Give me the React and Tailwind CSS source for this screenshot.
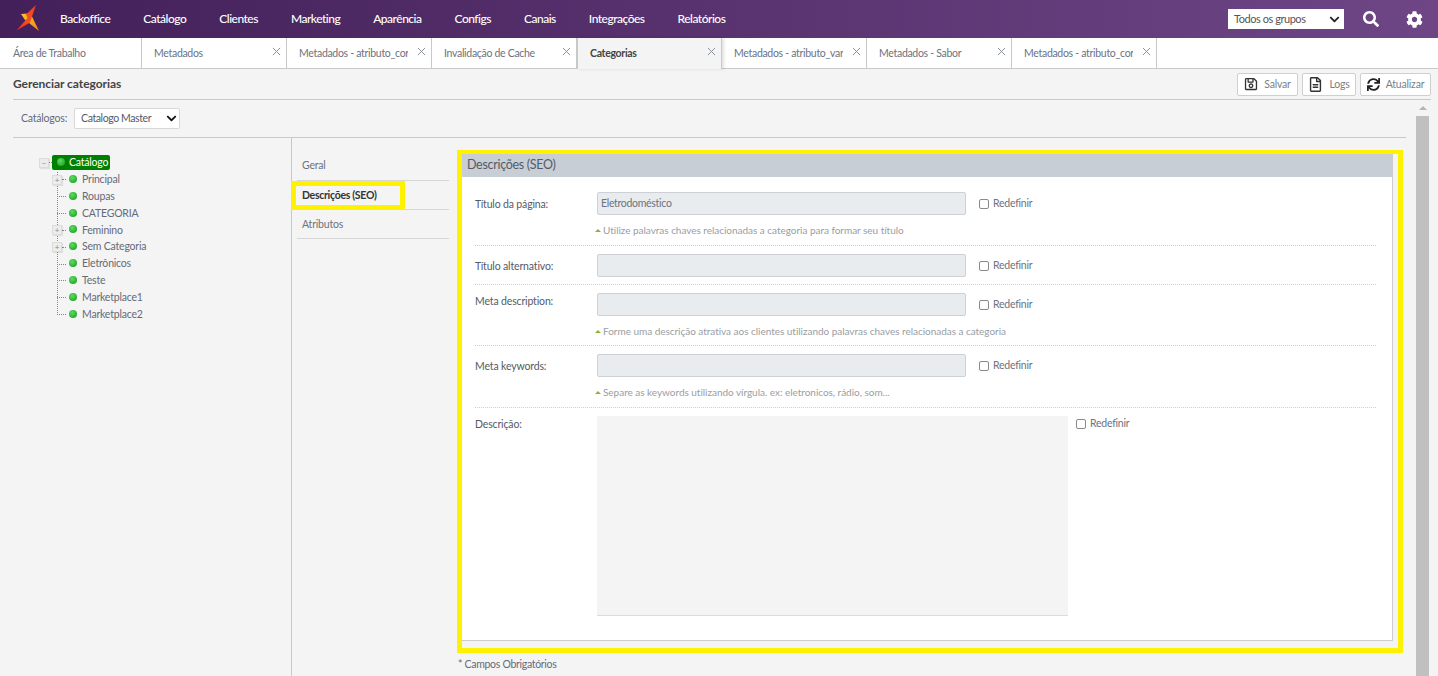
import { FaChevronDown, FaCog, FaRegFileAlt, FaRegSave, FaSearch, FaSync } from 'react-icons/fa';

const menu = ['Catálogo', 'Clientes', 'Marketing', 'Aparência', 'Configs', 'Canais', 'Integrações', 'Relatórios'];

const tabs = [
  { label: 'Área de Trabalho', width: 'w-[142px]', fixed: true },
  { label: 'Metadados', width: 'w-[145px]' },
  { label: 'Metadados - atributo_cor', width: 'w-[145px]', cut: true },
  { label: 'Invalidação de Cache', width: 'w-[145px]' },
  { label: 'Categorias', width: 'w-[145px]', active: true },
  { label: 'Metadados - atributo_variacao', width: 'w-[145px]', cut: true },
  { label: 'Metadados - Sabor', width: 'w-[145px]' },
  { label: 'Metadados - atributo_cor', width: 'w-[145px]', cut: true },
];

const tree = [
  { label: 'Principal', expandable: true },
  { label: 'Roupas' },
  { label: 'CATEGORIA' },
  { label: 'Feminino', expandable: true },
  { label: 'Sem Categoria', expandable: true },
  { label: 'Eletrônicos' },
  { label: 'Teste' },
  { label: 'Marketplace1' },
  { label: 'Marketplace2' },
];

const CloseIcon = () => (
  <svg viewBox="0 0 10 10" className="h-[9px] w-[9px] text-[#8b8f96]" fill="none" stroke="currentColor" strokeWidth="1.1">
    <path d="M1 1l8 8M9 1l-8 8" />
  </svg>
);

const Logo = () => (
  <svg viewBox="7 2 26 28" className="h-[28px] w-[26px]">
    <defs>
      <linearGradient id="logo" x1="0" y1="1" x2="1" y2="0.2">
        <stop offset="0" stopColor="#e62a24" />
        <stop offset="0.55" stopColor="#f4511e" />
        <stop offset="1" stopColor="#f0402a" />
      </linearGradient>
      <linearGradient id="logo2" x1="0" y1="0" x2="1" y2="1">
        <stop offset="0" stopColor="#fbc02d" />
        <stop offset="0.6" stopColor="#f9a01b" />
        <stop offset="1" stopColor="#f6801f" />
      </linearGradient>
    </defs>
    <path d="M13 12l7-.5 4 3 7 14.5-10-8-4-3z" fill="url(#logo2)" />
    <path d="M28 3L18 12.5l1.5 3.5L8.5 28.5 22 20.5 24.5 13z" fill="url(#logo)" />
  </svg>
);

const Header = () => (
  <header className="flex h-[38px] items-center bg-gradient-to-r from-[#432059] to-[#6e4686] pl-[15px] pr-[15px]">
    <div className="mt-[-2px] mr-[18px] w-[27px]"><Logo /></div>
    <nav className="flex items-center gap-[33px] text-[12px] font-medium tracking-[-0.5px] text-white">
      <span>Backoffice</span>
      {menu.map((item) => <span key={item}>{item}</span>)}
    </nav>
    <div className="ml-auto flex items-center">
      <div className="flex h-[20px] w-[116px] items-center justify-between bg-white pl-[6px] pr-[4px] text-[11px] tracking-[-0.45px] text-[#555]">
        Todos os grupos
        <FaChevronDown className="text-[11px] text-[#222]" />
      </div>
      <FaSearch className="ml-[19px] text-[16px] text-white" />
      <FaCog className="ml-[27px] text-[17px] text-white" />
    </div>
  </header>
);

const TabBar = () => (
  <div className="flex h-[31px] border-b border-[#c9c9c9] bg-white">
    {tabs.map((tab, index) => (
      <div
        key={index}
        className={`relative flex h-[31px] shrink-0 items-center pt-[1px] pl-[12px] text-[10.5px] tracking-[-0.3px] ${tab.width} ${tab.fixed ? 'pl-[13px]' : ''} ${tab.active ? 'border-r border-l border-[#c9c9c9] border-b-[#f4f4f4] bg-[#f4f4f4] font-bold text-[#444] shadow-[2px_0_3px_rgba(0,0,0,0.12)]' : 'border-r border-[#c9c9c9] text-[#6c7280]'}`}
      >
        <span className={tab.cut ? 'w-[109px] overflow-hidden whitespace-nowrap' : 'whitespace-nowrap'}>{tab.label}</span>
        {!tab.fixed && <span className="absolute top-[9px] right-[5px]"><CloseIcon /></span>}
      </div>
    ))}
  </div>
);

const ToolButton = ({ icon, label, width }) => (
  <div className={`flex h-[23px] items-center justify-center gap-[6px] rounded-[2px] border border-[#cfcfcf] bg-white text-[10.5px] tracking-[-0.2px] text-[#7b7f86] ${width}`}>
    {icon}
    <span className="pt-[2px]">{label}</span>
  </div>
);

const TitleBar = () => (
  <div className="ml-[13px] mr-[7px] flex h-[31px] items-center justify-between border-b border-[#c9c9c9]">
    <h1 className="text-[12px] font-bold tracking-[-0.05px] text-[#444]">Gerenciar categorias</h1>
    <div className="flex gap-[4px]">
      <ToolButton width="w-[61px]" label="Salvar" icon={<FaRegSave className="text-[14px] text-[#333]" />} />
      <ToolButton width="w-[54px]" label="Logs" icon={<FaRegFileAlt className="text-[15px] text-[#333]" />} />
      <ToolButton width="w-[71px]" label="Atualizar" icon={<FaSync className="text-[13px] text-[#222]" />} />
    </div>
  </div>
);

const Bullet = () => (
  <span className="mt-[-2px] h-[8px] w-[8px] shrink-0 rounded-full bg-[radial-gradient(circle_at_40%_35%,#5fdc5f,#12961d)]" />
);

const ExpandBox = ({ sign }) => (
  <span className="relative z-10 flex h-[10px] w-[10px] shrink-0 items-center justify-center border border-[#dcdcdc] bg-[#ececec] text-[8px] leading-none text-[#888] shadow-[1px_1px_1px_rgba(0,0,0,0.08)]">{sign}</span>
);

const Tree = () => (
  <div className="relative w-[291px] shrink-0 pl-[39px] pt-[16px] text-[10.5px] tracking-[-0.2px] text-[#666a78]">
    <div className="flex h-[17px] items-center">
      <ExpandBox sign="−" />
      <span className="w-[3px] border-t border-dotted border-[#888]" />
      <span className="flex h-[15px] items-center rounded-[2px] bg-[#008000] pl-[5px] pr-[2px] text-white">
        <Bullet />
        <span className="ml-[4px]">Catálogo</span>
      </span>
    </div>
    <span className="absolute top-[34px] left-[57px] h-[141px] border-l border-dotted border-[#888]" />
    {tree.map((node) => (
      <div key={node.label} className="ml-[13px] flex h-[16.85px] items-center pt-[1px]">
        {node.expandable
          ? <ExpandBox sign="+" />
          : <span className="w-[10px] shrink-0" />}
        <span className={`mr-[3px] shrink-0 border-t border-dotted border-[#888] ${node.expandable ? 'w-[4px]' : 'ml-[-5px] w-[9px]'}`} />
        <Bullet />
        <span className="ml-[5px]">{node.label}</span>
      </div>
    ))}
  </div>
);

const SideNav = () => (
  <div className="mt-[13px] ml-[5px] w-[152px] shrink-0 text-[10.5px] tracking-[-0.2px] text-[#6c7280]">
    <div className="flex h-[30px] items-center border-b border-[#d5d5d5] pl-[5px]">Geral</div>
    <div className="flex h-[29px] items-center border-b border-[#d5d5d5]">
      <span className="ml-[-6px] flex h-[29px] w-[114px] items-center border-[5px] border-[#fff200] pt-[1px] pl-[6px] font-bold tracking-[-0.3px] text-[#333]">Descrições (SEO)</span>
    </div>
    <div className="flex h-[29px] items-center border-b border-[#d5d5d5] pt-[2px] pl-[5px]">Atributos</div>
  </div>
);

const Reset = () => (
  <label className="flex items-center gap-[4px] text-[10.5px] tracking-[-0.25px] text-[#6c7280]">
    <span className="h-[10px] w-[10px] rounded-[2px] border border-[#8a8a8a] bg-white" />
    Redefinir
  </label>
);

const Field = ({ label, value, hint, height, labelClass }) => (
  <div className={`border-b border-dotted border-[#cfcfcf] ${height}`}>
    <div className="flex items-center">
      <span className={`w-[122px] shrink-0 text-[10.5px] tracking-[-0.15px] text-[#555a66] ${labelClass}`}>{label}</span>
      <div className="flex h-[23px] w-[369px] items-center rounded-[2px] border border-[#cdd0d4] bg-[#e9ecef] pl-[3px] text-[10.5px] tracking-[-0.3px] text-[#6c7280]">{value}</div>
      <span className="ml-[13px]"><Reset /></span>
    </div>
    {hint && (
      <div className="mt-[8px] ml-[120px] flex items-center text-[10px] tracking-[-0.03px] text-[#9a9da3]">
        <span className="mr-[2px] h-0 w-0 border-x-[3px] border-b-[3px] border-x-transparent border-b-[#8cb33a]" />
        {hint}
      </div>
    )}
  </div>
);

const Panel = () => (
  <div className="ml-[8px] w-[946px] shrink-0">
    <div className="mt-[12px] h-[503px] border-t-4 border-r-5 border-b-5 border-l-5 border-[#fff200] pr-[5px] pb-[7px]">
      <section className="h-full border-r border-b border-[#cccccc] bg-white">
        <h2 className="flex h-[23px] items-center bg-[#c8ced5] pl-[5px] text-[12.5px] tracking-[-0.3px] text-[#555a66]">Descrições (SEO)</h2>
        <div className="ml-[13px] mr-[16px] pt-[15px]">
          <Field label="Título da página:" value="Eletrodoméstico" hint="Utilize palavras chaves relacionadas a categoria para formar seu título" height="h-[54px]" labelClass="pt-[3px]" />
          <Field label="Título alternativo:" height="h-[39px] pt-[8px]" labelClass="pt-[2px]" />
          <Field label="Meta description:" hint="Forme uma descrição atrativa aos clientes utilizando palavras chaves relacionadas a categoria" height="h-[61px] pt-[8px]" labelClass="mb-[5px]" />
          <Field label="Meta keywords:" hint="Separe as keywords utilizando vírgula. ex: eletronicos, rádio, som..." height="h-[62px] pt-[8px]" labelClass="pt-[3px]" />
          <div className="flex pt-[8px]">
            <span className="w-[122px] shrink-0 pt-[1px] text-[10.5px] tracking-[-0.15px] text-[#555a66]">Descrição:</span>
            <div className="h-[200px] w-[471px] border-b border-[#dcdcdc] bg-[#f4f4f4]" />
            <span className="ml-[8px]"><Reset /></span>
          </div>
        </div>
      </section>
    </div>
    <p className="mt-[4px] ml-[1px] text-[10.5px] tracking-[-0.3px] text-[#666a78]">* Campos Obrigatórios</p>
  </div>
);

const Scrollbar = () => (
  <div className="flex w-[13px] shrink-0 flex-col items-center">
    <span className="mt-[6px] mb-[6px] h-0 w-0 border-x-[4px] border-b-[4px] border-x-transparent border-b-[#b5b5b5]" />
    <span className="w-[13px] flex-1 bg-[#c0c0c0]" />
  </div>
);

export default function App() {
  return (
    <div className="flex h-[676px] w-[1438px] flex-col overflow-hidden bg-[#f4f4f4] font-['Lato',sans-serif]">
      <Header />
      <TabBar />
      <TitleBar />
      <div className="flex min-h-0 flex-1">
        <div className="w-[1416px] min-w-0 shrink-0">
          <div className="ml-[13px] mr-[10px] flex h-[38px] items-center border-b border-[#c9c9c9] pl-[8px] text-[10.5px] tracking-[-0.2px] text-[#666a78]">
            Catálogos:
            <div className="ml-[7px] flex h-[21px] w-[106px] items-center justify-between rounded-[2px] border border-[#d8d8d8] bg-white pl-[6px] pr-[2px] tracking-[-0.4px] text-[#555a66]">
              Catalogo Master
              <FaChevronDown className="text-[11px] text-[#111]" />
            </div>
          </div>
          <div className="flex h-[539px]">
            <div className="flex border-r border-[#c9c9c9]"><Tree /></div>
            <SideNav />
            <Panel />
          </div>
        </div>
        <Scrollbar />
      </div>
    </div>
  );
}
